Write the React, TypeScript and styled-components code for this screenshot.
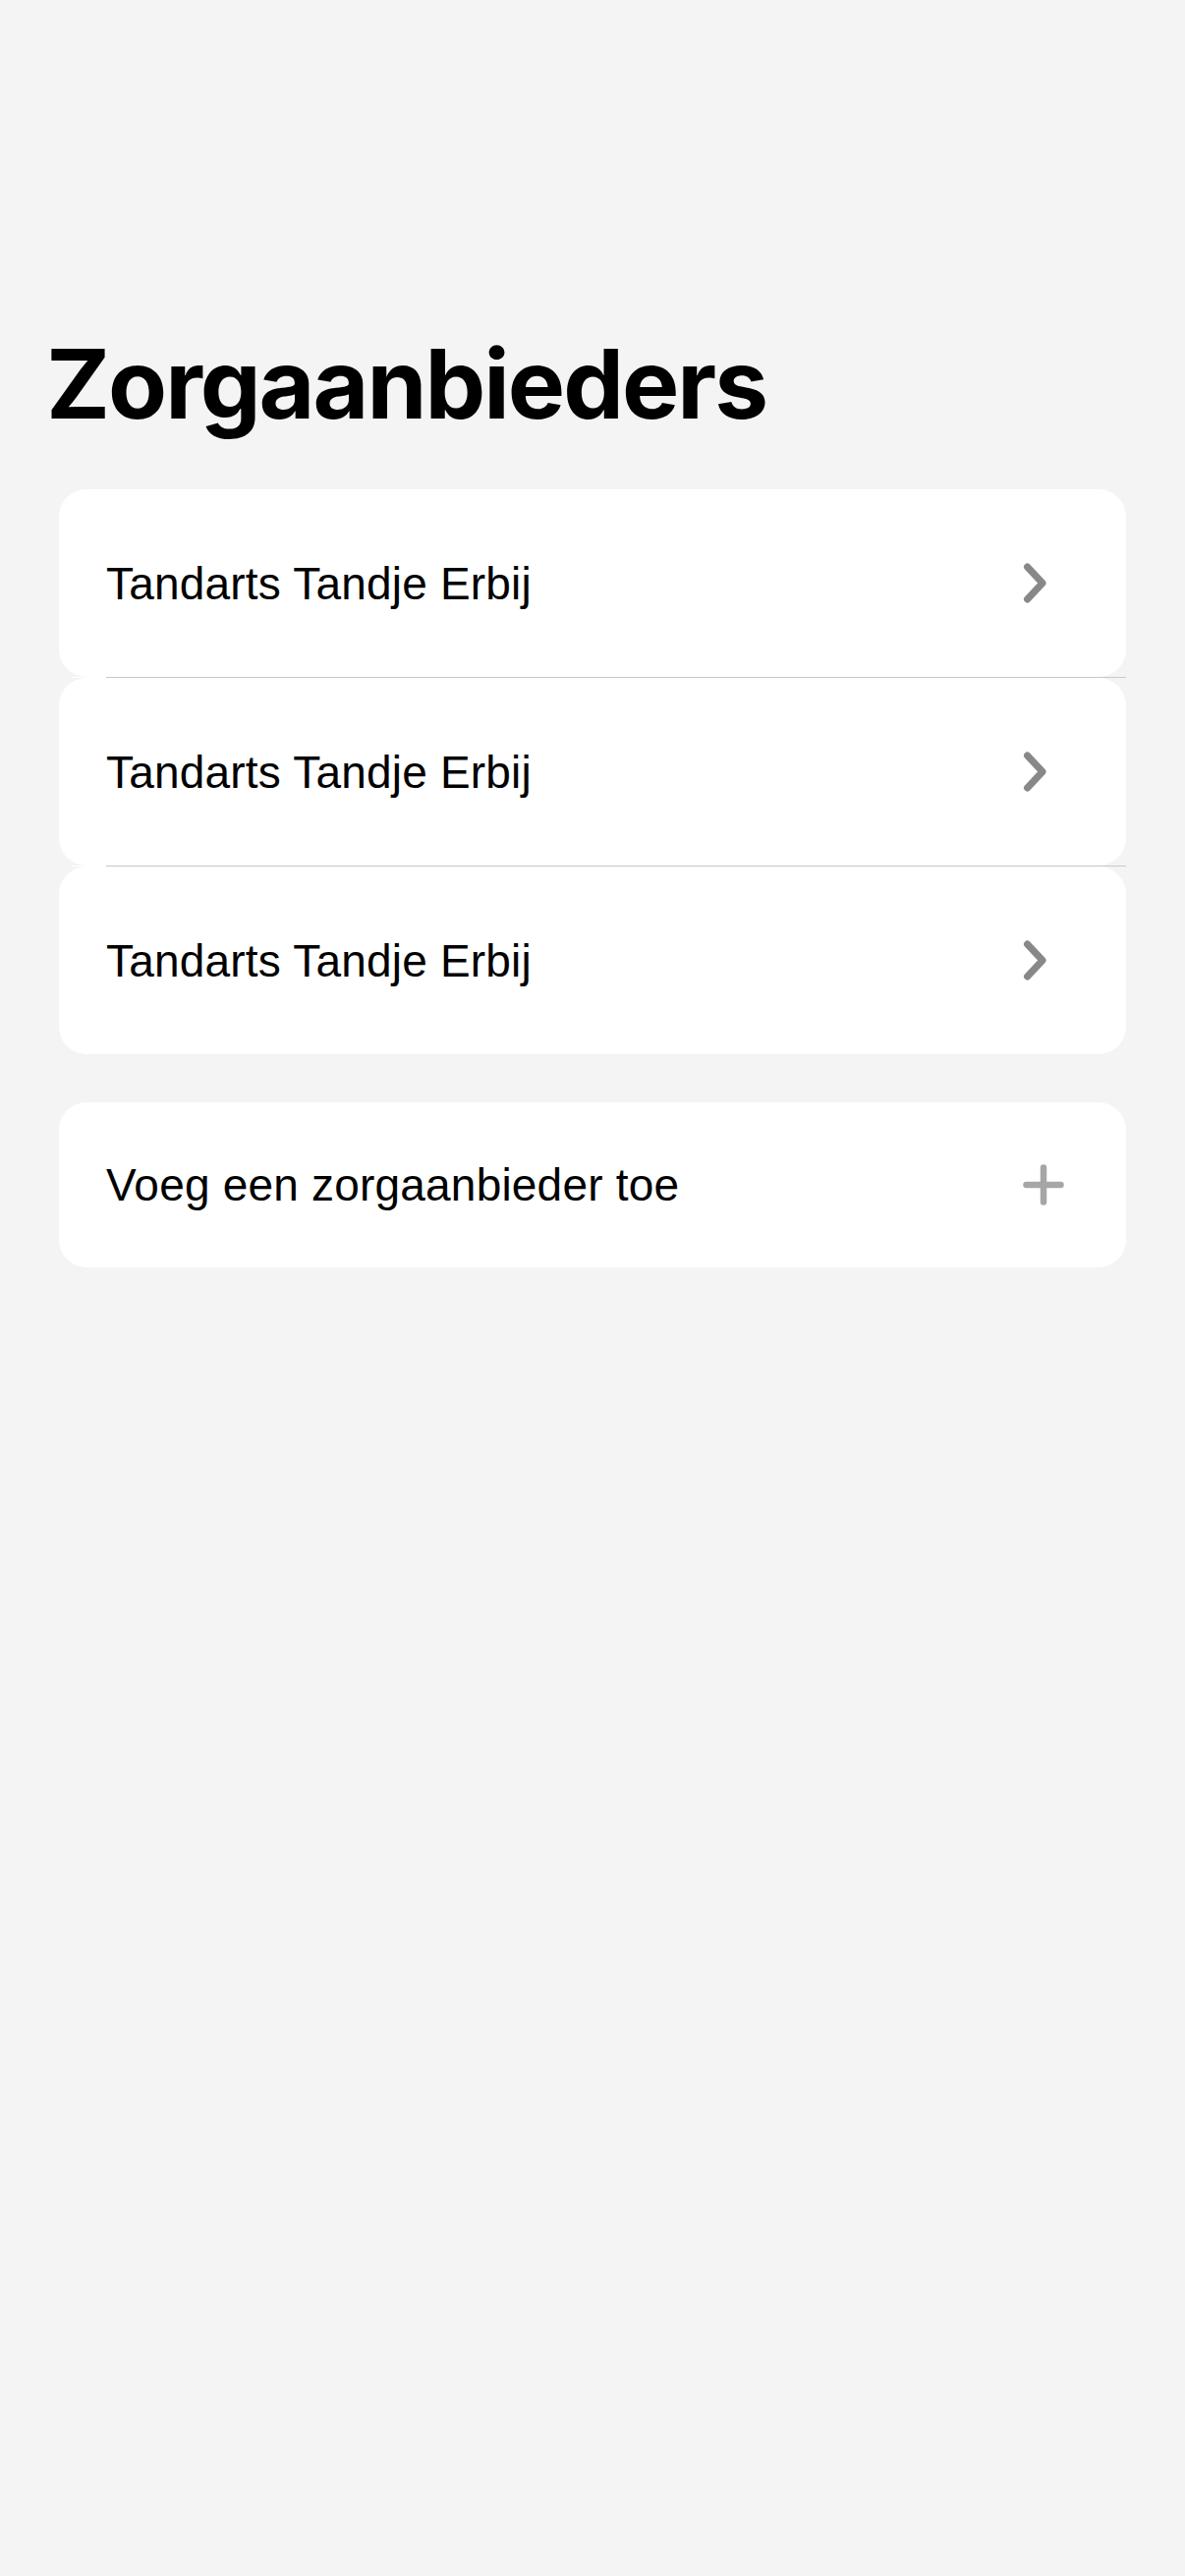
import React from "react";
import styled, { createGlobalStyle } from "styled-components";

const GlobalStyle = createGlobalStyle`
  html, body {
    margin: 0;
    padding: 0;
    background: #f4f4f4;
  }
  body {
    min-height: 2622px;
    font-family: "Liberation Sans", Arial, sans-serif;
    -webkit-font-smoothing: antialiased;
  }
`;

const Screen = styled.main`
  display: flex;
  flex-direction: column;
  padding: 331px 60px 0 60px;
  min-height: 2622px;
  box-sizing: border-box;
  background: #f4f4f4;
`;

const LargeTitle = styled.h1`
  margin: 0 0 47px -13px;
  font-family: Inter, "Liberation Sans", sans-serif;
  font-weight: 700;
  font-size: 98px;
  line-height: 120px;
  letter-spacing: -2px;
  color: #000;
`;

const Group = styled.section<{ $gapAfter?: number }>`
  display: flex;
  flex-direction: column;
  margin-bottom: ${(p) => p.$gapAfter ?? 0}px;
`;

const Row = styled.div<{ $height: number }>`
  display: flex;
  align-items: center;
  justify-content: space-between;
  height: ${(p) => p.$height}px;
  padding-left: 48px;
  background: #ffffff;
  border-radius: 28px;
  box-sizing: border-box;
`;

const RowLabel = styled.span`
  font-family: "Liberation Sans", Arial, sans-serif;
  font-size: 46px;
  letter-spacing: 0.2px;
  color: #000;
`;

const Trail = styled.span<{ $right: number }>`
  display: flex;
  align-items: center;
  margin-right: ${(p) => p.$right}px;
`;

const Divider = styled.div`
  height: 1px;
  margin-left: 13px;
  background: linear-gradient(to right, #ffffff 35px, #c8c8c8 35px);
`;

const Chevron = () => (
  <svg width="24" height="41" viewBox="0 0 24 41" aria-hidden="true">
    <path
      d="M4.5 4 L20 20.5 L4.5 37"
      fill="none"
      stroke="#888888"
      strokeWidth="7"
      strokeLinecap="round"
      strokeLinejoin="round"
    />
  </svg>
);

const Plus = () => (
  <svg width="42" height="42" viewBox="0 0 42 42" aria-hidden="true">
    <path
      d="M21 3.5 V38.5 M3.5 21 H38.5"
      fill="none"
      stroke="#a6a6a6"
      strokeWidth="6.5"
      strokeLinecap="round"
    />
  </svg>
);

const providers = ["Tandarts Tandje Erbij", "Tandarts Tandje Erbij", "Tandarts Tandje Erbij"];

export default function App() {
  return (
    <>
      <GlobalStyle />
      <Screen>
        <LargeTitle>Zorgaanbieders</LargeTitle>
        <Group $gapAfter={49}>
          {providers.map((name, i) => (
            <React.Fragment key={i}>
              {i > 0 && <Divider />}
              <Row $height={191}>
                <RowLabel>{name}</RowLabel>
                <Trail $right={81}>
                  <Chevron />
                </Trail>
              </Row>
            </React.Fragment>
          ))}
        </Group>
        <Group>
          <Row $height={168}>
            <RowLabel>Voeg een zorgaanbieder toe</RowLabel>
            <Trail $right={63}>
              <Plus />
            </Trail>
          </Row>
        </Group>
      </Screen>
    </>
  );
}
